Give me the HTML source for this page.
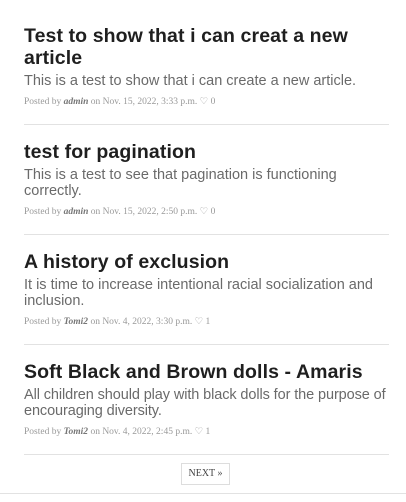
<!DOCTYPE html>
<html><head><meta charset="utf-8"><style>
body{margin:0;background:#fff;width:406px;height:502px;overflow:hidden;font-family:"Liberation Sans",sans-serif}
.wrap{position:absolute;left:24px;width:365px;top:25px}
.post{border-bottom:1px solid #e2e2e2;padding-bottom:16px;margin-bottom:16px}
h2{margin:0;font-size:19.5px;line-height:22px;font-weight:bold;color:#1f1f1f;letter-spacing:0.1px}
p{margin:4px 0 0;font-size:14.5px;line-height:16px;color:#6a6a6a;font-weight:300;width:380px;white-space:nowrap}
.meta{margin-top:7px;font-family:"Liberation Serif",serif;font-size:9.5px;line-height:12px;color:#999}
.meta b{color:#777;font-style:italic}
.btn{position:absolute;left:181px;top:463px;width:47px;height:20px;border:1px solid #ddd;font-family:"Liberation Serif",serif;font-size:10px;line-height:20px;text-align:center;color:#444}
.bl{position:absolute;left:0;right:0;top:493px;border-top:1px solid #e2e2e2}
</style></head><body>
<div class="wrap">
<div class="post"><h2>Test to show that i can creat a new<br>article</h2><p>This is a test to show that i can create a new article.</p><div class="meta">Posted by <b>admin</b> on Nov. 15, 2022, 3:33 p.m. ♡ 0</div></div>
<div class="post"><h2>test for pagination</h2><p>This is a test to see that pagination is functioning<br>correctly.</p><div class="meta">Posted by <b>admin</b> on Nov. 15, 2022, 2:50 p.m. ♡ 0</div></div>
<div class="post"><h2>A history of exclusion</h2><p>It is time to increase intentional racial socialization and<br>inclusion.</p><div class="meta">Posted by <b>Tomi2</b> on Nov. 4, 2022, 3:30 p.m. ♡ 1</div></div>
<div class="post"><h2>Soft Black and Brown dolls - Amaris</h2><p style="letter-spacing:-0.1px">All children should play with black dolls for the purpose of<br>encouraging diversity.</p><div class="meta">Posted by <b>Tomi2</b> on Nov. 4, 2022, 2:45 p.m. ♡ 1</div></div>
</div>
<div class="btn">NEXT »</div>
<div class="bl"></div>
</body></html>
